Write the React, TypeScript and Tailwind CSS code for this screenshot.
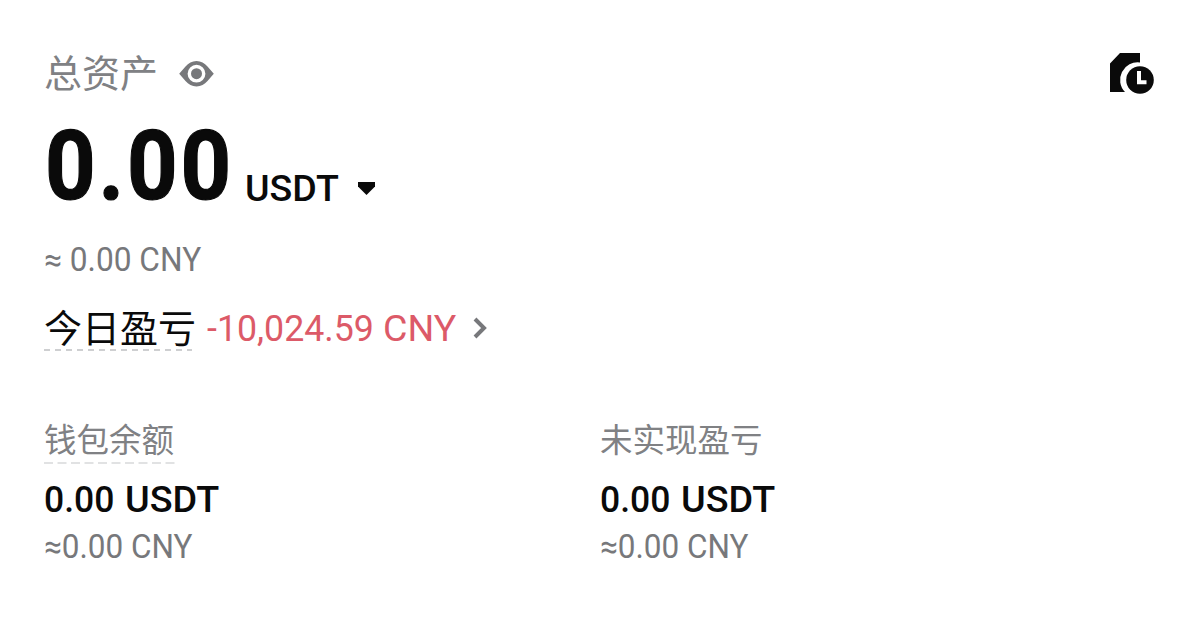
import React from 'react'

const EyeIcon: React.FC = () => (
  <svg className="w-9 h-9 text-[#77787b]" viewBox="0 0 36 36" fill="none">
    <path
      fillRule="evenodd"
      fill="currentColor"
      d="M18.5 5C23 5 26.5 7.2 29.5 10.4L35.8 17.7L29.5 25C26.5 28.2 23 30.4 18.5 30.4C14 30.4 10.5 28.2 7.5 25L1.2 17.7L7.5 10.4C10.5 7.2 14 5 18.5 5ZM18.5 8.8A8.9 8.9 0 1 0 18.5 26.6A8.9 8.9 0 1 0 18.5 8.8Z"
    />
    <circle cx="18.5" cy="17.7" r="5.5" fill="currentColor" />
  </svg>
)

const HistoryIcon: React.FC = () => (
  <svg className="w-11 h-[41px] text-[#0a0a0a]" viewBox="0 0 44 41" fill="none">
    <path fill="currentColor" d="M0 10.5L10 0H30V9.5A17.5 17.5 0 0 0 15 39H0Z" />
    <circle cx="30" cy="27" r="13.8" fill="currentColor" />
    <path d="M29 18V29.3H36.5" stroke="white" strokeWidth="4" />
  </svg>
)

const columns = [
  { label: '钱包余额', amount: '0.00', fiat: '≈0.00 CNY', underline: true },
  { label: '未实现盈亏', amount: '0.00', fiat: '≈0.00 CNY', underline: false }
]

const DashedLine: React.FC<{ className: string; dash: string }> = ({ className, dash }) => (
  <svg className={`block h-[2px] ${className}`}>
    <line x1="0" y1="1" x2="100%" y2="1" stroke="currentColor" strokeWidth="1.5" strokeDasharray={dash} />
  </svg>
)

const App: React.FC = () => {
  return (
    <div className="w-[1200px] h-[632px] bg-white pl-11 pt-[51px] overflow-hidden whitespace-nowrap font-[Roboto,'Noto_Sans_CJK_SC',sans-serif]">
      <div className="flex items-start justify-between h-[66px] pr-[46px]">
        <div className="flex items-center h-[46px]">
          <span className="w-[134px] text-[38px] leading-[46px] text-[#808184]">总资产</span>
          <EyeIcon />
        </div>
        <div className="pt-0.5">
          <HistoryIcon />
        </div>
      </div>

      {/* Total balance */}
      <div className="flex items-end h-[100px] text-[#0a0a0a]">
        <span className="w-[201px] pl-px text-[97px] leading-[101px] font-bold tracking-[3.2px] origin-left scale-x-[0.91] [-webkit-text-stroke:1.2px_#0a0a0a]">
          0.00
        </span>
        <div className="flex items-center h-14">
          <span className="w-[112px] text-[37px] leading-14 font-medium origin-left scale-x-[1.015]">USDT</span>
          <svg className="w-[18px] h-[14px]" viewBox="0 0 18 14" fill="currentColor">
            <path d="M1 0H18V4.5L9.5 13L1 4.5Z" />
          </svg>
        </div>
      </div>

      <div className="mt-[23px] h-10 text-[32.5px] leading-[41px] text-[#77787b]">
        <span className="inline-block origin-left scale-x-[0.975]">≈ 0.00 CNY</span>
      </div>

      {/* Today's PNL */}
      <div className="mt-[26px] flex h-[46px]">
        <div className="w-[163px]">
          <div className="h-[43px] text-[38px] leading-[46px] text-[#0a0a0a]">今日盈亏</div>
          <DashedLine className="w-[148px] text-[#bfc0c2]" dash="6 5" />
        </div>
        <div className="flex w-[265px] text-[37.5px] leading-[44px] text-[#dc5a68]">
          <span className="w-[176px] origin-left scale-x-[0.953]">-10,024.59</span>
          <span className="origin-left">CNY</span>
        </div>
        <svg className="mt-[11px] w-4 h-[22px] text-[#77787b]" viewBox="0 0 16 22" fill="none">
          <path d="M3 2L12 11L3 20" stroke="currentColor" strokeWidth="4" />
        </svg>
      </div>

      <div className="mt-[66px] grid grid-cols-[556px_1fr]">
        {columns.map((col) => (
          <div key={col.label}>
            <div className="h-11 text-[32.5px] leading-[46px] text-[#808184]">{col.label}</div>
            <div className="h-[18px]">
              {col.underline && <DashedLine className="w-[131px] text-[#d8d9da]" dash="9 4.5" />}
            </div>
            <div className="flex h-[46px] text-[37px] leading-10 font-medium text-[#0a0a0a]">
              <span className="w-[81px] origin-left scale-x-[0.96]">{col.amount}</span>
              <span className="origin-left scale-x-[1.02]">USDT</span>
            </div>
            <div className="text-[33px] leading-[41px] text-[#77787b]">
              <span className="inline-block origin-left scale-x-[0.955]">{col.fiat}</span>
            </div>
          </div>
        ))}
      </div>
    </div>
  )
}

export default App
